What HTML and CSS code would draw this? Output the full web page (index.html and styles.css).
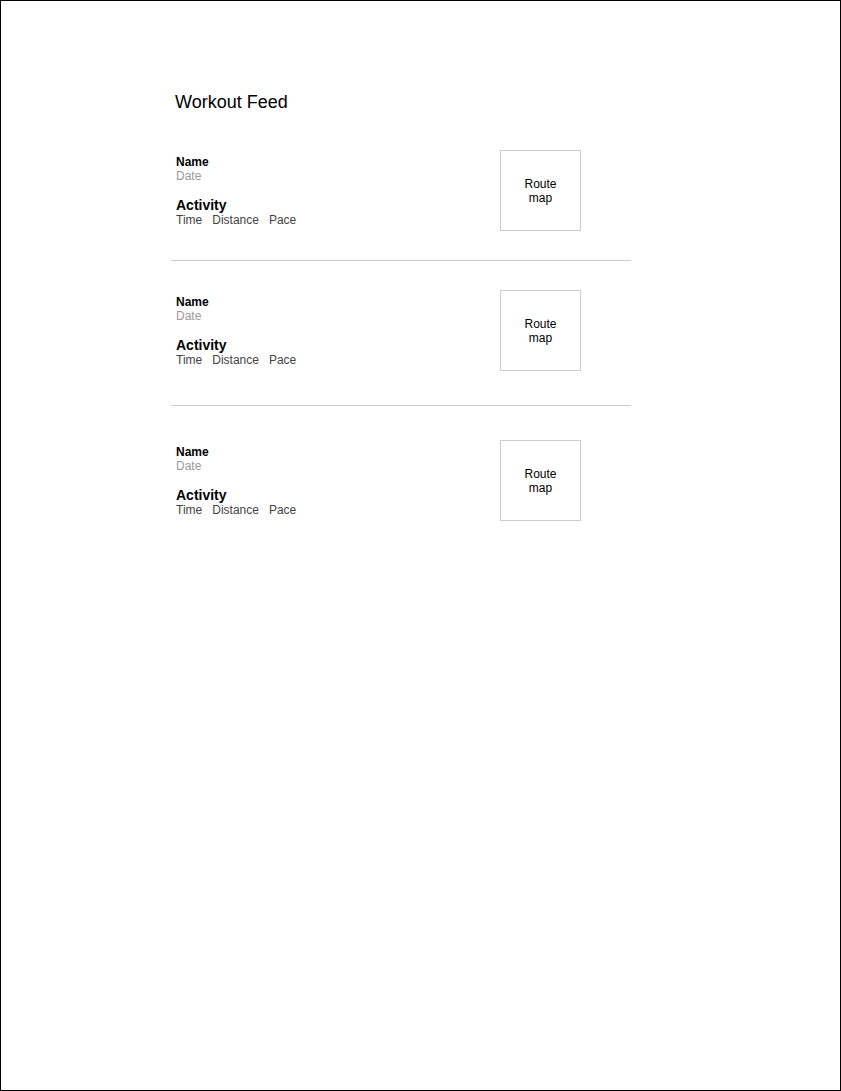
FILE: index.html
```html
<!DOCTYPE html>
<html lang="en">
<head>
    <meta charset="UTF-8">
    <meta name="viewport" content="width=device-width, initial-scale=1.0">
    <title>Workout Feed</title>
    <link rel="stylesheet" href="styles.css">
</head>
<body>
    <div class="page">
        <div class="feed">
            <h1>Workout Feed</h1>
            <div class="item">
                <div class="info">
                    <div class="name">Name</div>
                    <div class="date">Date</div>
                    <div class="activity">Activity</div>
                    <div class="stats"><span>Time</span><span>Distance</span><span>Pace</span></div>
                </div>
                <div class="map">Route<br>map</div>
            </div>
            <div class="item">
                <div class="info">
                    <div class="name">Name</div>
                    <div class="date">Date</div>
                    <div class="activity">Activity</div>
                    <div class="stats"><span>Time</span><span>Distance</span><span>Pace</span></div>
                </div>
                <div class="map">Route<br>map</div>
            </div>
            <div class="item">
                <div class="info">
                    <div class="name">Name</div>
                    <div class="date">Date</div>
                    <div class="activity">Activity</div>
                    <div class="stats"><span>Time</span><span>Distance</span><span>Pace</span></div>
                </div>
                <div class="map">Route<br>map</div>
            </div>
        </div>
    </div>
</body>
</html>
```

FILE: styles.css
```css
html, body{
    margin: 0;
    height: 100%;
}
body{
    font-family: "Liberation Sans", Arial, sans-serif;
    color: #000;
    background-color: #fff;
}
.page{
    box-sizing: border-box;
    height: 100%;
    border: 1px solid #000;
    padding-top: 90px;
}
.feed{
    width: 460px;
    margin-left: 170px;
}
.feed h1{
    font-size: 18px;
    font-weight: normal;
    line-height: 22px;
    margin: 0 0 37px 4px;
}

.item{
    display: grid;
    grid-template-columns: 324px 81px;
    padding: 0 0 29px 5px;
    border-bottom: 1px solid #ccc;
}
.item:nth-child(3){
    padding-top: 29px;
    padding-bottom: 34px;
}
.item:last-child{
    padding-top: 34px;
    border-bottom: none;
}

.info{
    padding-top: 5px;
    font-size: 12px;
    line-height: 14px;
}
.info .name{
    font-weight: bold;
}
.info .date{
    color: #999;
}
.info .activity{
    font-size: 14px;
    font-weight: bold;
    line-height: 16px;
    margin-top: 14px;
}
.info .stats{
    color: #444;
}
.info .stats span{
    margin-right: 10px;
}

.map{
    box-sizing: border-box;
    width: 81px;
    height: 81px;
    border: 1px solid #ccc;
    display: flex;
    justify-content: center;
    align-items: center;
    text-align: center;
    font-size: 12px;
    line-height: 14px;
}
```
